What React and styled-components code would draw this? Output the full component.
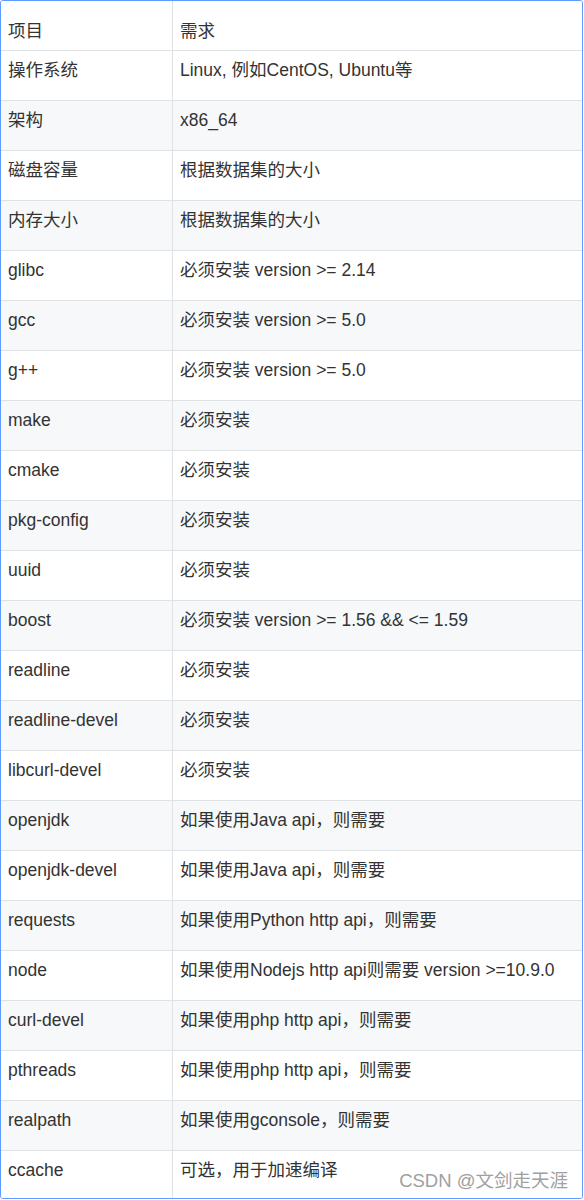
import styled, { createGlobalStyle } from "styled-components";

const GlobalStyle = createGlobalStyle`
  body {
    margin: 0;
    background: #fff;
    font-family: "Liberation Sans", Arial, "Noto Sans CJK SC", sans-serif;
  }
`;

const rows = [
  ["操作系统", "Linux, 例如CentOS, Ubuntu等"],
  ["架构", "x86_64"],
  ["磁盘容量", "根据数据集的大小"],
  ["内存大小", "根据数据集的大小"],
  ["glibc", "必须安装 version >= 2.14"],
  ["gcc", "必须安装 version >= 5.0"],
  ["g++", "必须安装 version >= 5.0"],
  ["make", "必须安装"],
  ["cmake", "必须安装"],
  ["pkg-config", "必须安装"],
  ["uuid", "必须安装"],
  ["boost", "必须安装 version >= 1.56 && <= 1.59"],
  ["readline", "必须安装"],
  ["readline-devel", "必须安装"],
  ["libcurl-devel", "必须安装"],
  ["openjdk", "如果使用Java api，则需要"],
  ["openjdk-devel", "如果使用Java api，则需要"],
  ["requests", "如果使用Python http api，则需要"],
  ["node", "如果使用Nodejs http api则需要 version >=10.9.0"],
  ["curl-devel", "如果使用php http api，则需要"],
  ["pthreads", "如果使用php http api，则需要"],
  ["realpath", "如果使用gconsole，则需要"],
  ["ccache", "可选，用于加速编译"],
];

const Frame = styled.div`
  position: relative;
  box-sizing: border-box;
  width: 583px;
  height: 1199px;
  border: 1px solid #5c9bff;
  border-radius: 3px;
  overflow: hidden;
`;

const Table = styled.table`
  width: 100%;
  table-layout: fixed;
  border-collapse: separate;
  border-spacing: 0;
  color: #333;
  font-size: 17.5px;
  line-height: 24px;
`;

const Row = styled.tr`
  height: 50px;
  background: ${(p) => (p.$striped ? "#f6f8fa" : "#fff")};
`;

const Cell = styled.td`
  box-sizing: border-box;
  padding: ${(p) => (p.$head ? "18px" : "7px")} 6px 0 7px;
  vertical-align: top;
  white-space: nowrap;
  text-align: left;
  font-weight: 400;
  border-bottom: 1px solid #dfe2e5;
  &:first-child {
    border-right: 1px solid #dfe2e5;
  }
`;

const Watermark = styled.div`
  position: absolute;
  right: 14px;
  bottom: 6px;
  font-size: 18.5px;
  color: #a0a0a0;
  text-shadow: 0 0 1px #fff;
`;

export default function App() {
  return (
    <>
      <GlobalStyle />
      <Frame>
        <Table>
          <colgroup>
            <col style={{ width: 172 }} />
            <col />
          </colgroup>
          <thead>
            <Row>
              <Cell as="th" $head>项目</Cell>
              <Cell as="th" $head>需求</Cell>
            </Row>
          </thead>
          <tbody>
            {rows.map(([item, need], i) => (
              <Row key={item} $striped={i % 2 === 1}>
                <Cell>{item}</Cell>
                <Cell>{need}</Cell>
              </Row>
            ))}
          </tbody>
        </Table>
        <Watermark>CSDN @文剑走天涯</Watermark>
      </Frame>
    </>
  );
}
